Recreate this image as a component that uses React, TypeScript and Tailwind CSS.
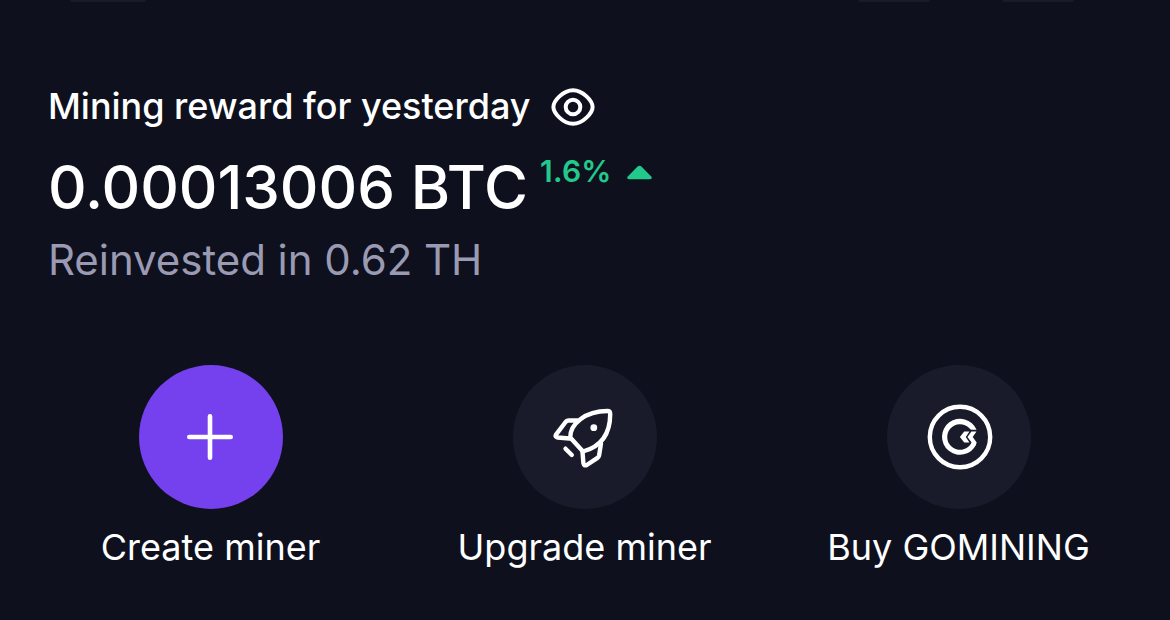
import type { ReactNode } from "react";

function EyeIcon() {
  return (
    <svg width="44" height="38" viewBox="0 0 44 38" fill="none" stroke="white" strokeWidth="4">
      <path d="M2.4 19C2.4 13 12 2.3 22 2.3S41.6 13 41.6 19S32 35.7 22 35.7S2.4 25 2.4 19Z" />
      <circle cx="22" cy="19" r="7.3" />
    </svg>
  );
}

function PlusIcon() {
  return (
    <svg width="80" height="80" viewBox="1 0 80 80" stroke="white" strokeWidth="4.6" strokeLinecap="round">
      <path d="M19.3 40H60.7M40 19.3V60.7" />
    </svg>
  );
}

function RocketIcon() {
  return (
    <svg width="80" height="80" viewBox="0 -3 80 80" fill="none" stroke="white" strokeWidth="4.4" strokeLinecap="round" strokeLinejoin="round">
      <path d="M25.2 37.5C25.2 24 40 11 62.5 11Q65.2 11 65.2 14C65.2 32 58.5 46 38 51.5Z" />
      <path d="M32.5 20.5H23.3Q21.5 20.5 20.6 22L11 34.6Q9.8 37 12.5 37.5L24.5 38.5" />
      <path d="M37.5 52L38.4 63.2Q39 66.3 41.8 65L52.5 57.8Q53.8 57 54.1 55.4L56 43.5" />
      <path d="M20.5 48.7L26.8 55" />
      <circle cx="48.8" cy="27.7" r="3.4" fill="white" stroke="none" />
    </svg>
  );
}

function CoinIcon() {
  return (
    <svg width="80" height="80" viewBox="0 0 80 80" fill="none" stroke="white">
      <circle cx="41" cy="40" r="30.2" strokeWidth="4.4" />
      <path d="M57.6 32.8A18 18 0 1 0 57.2 47.6L53.8 43.8L52.6 45.4A12.8 12.8 0 1 1 50.4 31.3Q51.6 32.8 53 32.8Z" fill="white" stroke="none" />
      <path d="M45.2 34.5H50.4L46.8 40L50.4 45.5H45.2L40.9 40Z" fill="white" stroke="none" />
      <path d="M52.4 34.5H57.5L53.7 40L57.7 45.4L56.6 48.4L53 46L48.5 40Z" fill="white" stroke="none" />
    </svg>
  );
}

function Action({ label, color, children }: { label: string; color: string; children: ReactNode }) {
  return (
    <button className="flex w-[374px] flex-col items-center">
      <span className={`flex size-36 items-center justify-center rounded-full ${color}`}>{children}</span>
      <span className="mt-4 whitespace-nowrap pr-px text-[36px] leading-[44px]">{label}</span>
    </button>
  );
}

export default function App() {
  return (
    <main className="flex h-[620px] w-[1170px] flex-col overflow-hidden bg-[#0e101e] font-['Inter',sans-serif] text-white">
      <div className="flex h-[2px] shrink-0">
        <div className="ml-[70px] h-[2px] w-[76px] rounded-b-full bg-[#191b29]" />
        <div className="ml-[712px] h-[2px] w-[72px] rounded-b-full bg-[#191b29]" />
        <div className="ml-[72px] h-[2px] w-[72px] rounded-b-full bg-[#191b29]" />
      </div>
      <section className="flex flex-col pl-12 pt-[82px]">
        <div className="flex h-[46px] items-center">
          <h1 className="w-[503px] whitespace-nowrap pb-0.5 text-[36px] font-medium leading-[44px] tracking-[-0.02px]">Mining reward for yesterday</h1>
          <EyeIcon />
        </div>
        <div className="mt-[19px] flex h-[77px] items-start">
          <p className="w-[492px] whitespace-nowrap text-[60px] font-medium leading-[76px] tracking-[-0.08px]">0.00013006 BTC</p>
          <div className="mt-1 flex items-center text-[#22c98b]">
            <span className="w-[87px] whitespace-nowrap text-[30px] font-semibold leading-[36px] tracking-[0.25px]">1.6%</span>
            <svg className="mt-[3px]" width="25" height="15" viewBox="0 0 25 15" fill="currentColor">
              <path d="M10.6 1.5Q12.5 0 14.4 1.5L24 11.2Q26 14.3 22.5 14.3H2.5Q-1 14.3 1 11.2Z" />
            </svg>
          </div>
        </div>
        <p className="mt-2 whitespace-nowrap text-[42px] leading-[52px] tracking-[-0.04px] text-[#9a9ab3]">Reinvested in 0.62 TH</p>
      </section>
      <nav className="mt-[79px] flex pl-6">
        <Action label="Create miner" color="bg-[#7540ee]"><PlusIcon /></Action>
        <Action label="Upgrade miner" color="bg-[#1a1b2a]"><RocketIcon /></Action>
        <Action label="Buy GOMINING" color="bg-[#1a1b2a]"><CoinIcon /></Action>
      </nav>
    </main>
  );
}
